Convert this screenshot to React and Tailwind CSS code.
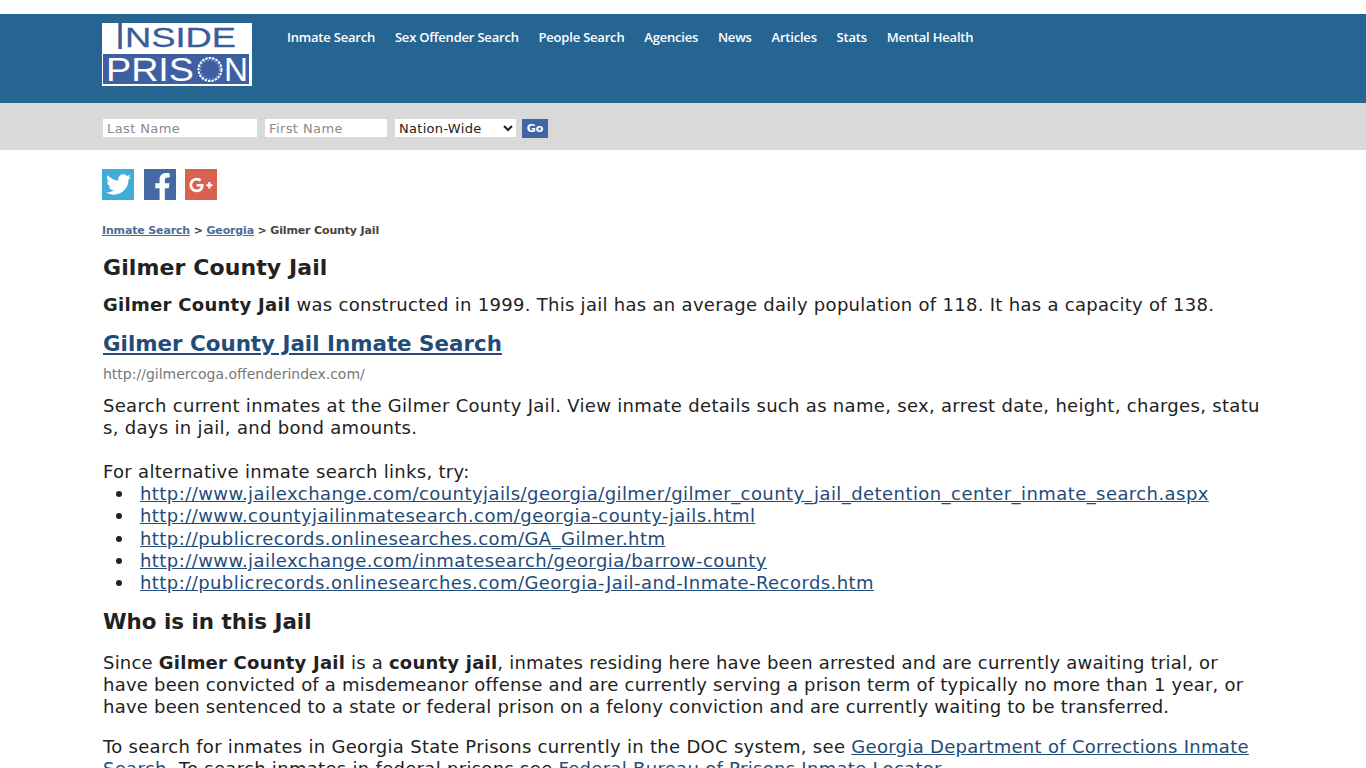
import { FaTwitter, FaFacebookF, FaGooglePlusG } from 'react-icons/fa';

const navLinks = ['Inmate Search', 'Sex Offender Search', 'People Search', 'Agencies', 'News', 'Articles', 'Stats', 'Mental Health'];

const altLinks = [
  'http://www.jailexchange.com/countyjails/georgia/gilmer/gilmer_county_jail_detention_center_inmate_search.aspx',
  'http://www.countyjailinmatesearch.com/georgia-county-jails.html',
  'http://publicrecords.onlinesearches.com/GA_Gilmer.htm',
  'http://www.jailexchange.com/inmatesearch/georgia/barrow-county',
  'http://publicrecords.onlinesearches.com/Georgia-Jail-and-Inmate-Records.htm',
];

function Logo() {
  return (
    <svg width="150" height="63" viewBox="0 0 150 63" className="shrink-0 font-['Liberation_Sans',sans-serif]">
      <rect width="150" height="63" fill="#fff" />
      <rect x="1" y="31" width="146" height="30" fill="#3f5fa3" />
      <text x="13" y="26" fontSize="36" fill="#3a5c9c">I</text>
      <text x="23" y="24" fontSize="28" fill="#3a5c9c" stroke="#3a5c9c" strokeWidth="0.3" textLength="111" lengthAdjust="spacingAndGlyphs">NSIDE</text>
      <text x="4" y="58" fontSize="33" fill="#fff" textLength="88" lengthAdjust="spacingAndGlyphs">PRIS</text>
      <circle cx="108" cy="46.5" r="11.5" fill="none" stroke="#fff" strokeWidth="2" strokeDasharray="2.5 1" />
      <circle cx="108" cy="46.5" r="9.5" fill="none" stroke="#c9d3e8" strokeWidth="1" strokeDasharray="1.5 2" />
      <text x="122" y="58" fontSize="33" fill="#fff" textLength="24" lengthAdjust="spacingAndGlyphs">N</text>
    </svg>
  );
}

export default function App() {
  return (
    <div className="font-['DejaVu_Sans',sans-serif] text-[#222] bg-white h-[768px] overflow-hidden">
      <div className="mt-[14px] h-[89px] bg-[#266591] pt-[9px] pl-[102px] flex">
        <Logo />
        <nav className="flex gap-[19.8px] ml-[35px] pt-[5px] font-['Open_Sans',sans-serif] font-semibold">
          {navLinks.map((link) => (
            <a key={link} className="text-white text-[13px] leading-[18px] tracking-[-0.2px] whitespace-nowrap">{link}</a>
          ))}
        </nav>
      </div>

      <div className="h-[47px] bg-[#d9d9d9] pl-[103px] pt-[16px] flex items-start gap-2 text-[13px]">
        <input placeholder="Last Name" className="w-[154px] h-[18px] bg-white px-1 pt-[2px] tracking-[0.4px] placeholder:text-[#8a8a8a] outline-none" />
        <input placeholder="First Name" className="w-[122px] h-[18px] bg-white px-1 pt-[2px] tracking-[0.4px] placeholder:text-[#8a8a8a] outline-none" />
        <select className="w-[121px] h-[18px] bg-white text-[#222] tracking-[0.3px]">
          <option>Nation-Wide</option>
        </select>
        <button className="w-[26px] h-[19px] bg-[#3f65a5] text-white text-[11px] font-bold ml-[-2px] pt-[1px]">Go</button>
      </div>

      <div className="pl-[102px]">
        <div className="flex pt-[19px]">
          <a className="w-8 h-[31px] bg-[#41acd8] text-white flex items-center justify-center"><FaTwitter size={25} /></a>
          <a className="w-8 h-[31px] ml-[10px] bg-[#456aa3] text-white flex items-end justify-center pl-[5px] overflow-hidden"><FaFacebookF size={27} /></a>
          <a className="w-8 h-[31px] ml-[9px] bg-[#d8614f] text-white flex items-center justify-center"><FaGooglePlusG size={24} /></a>
        </div>
      </div>

      <div className="pl-[103px] w-[1264px]">
        <div className="mt-[24px] ml-[-1px] text-[11px] leading-[14px] font-bold text-[#444] tracking-[-0.15px]">
          <a className="underline text-[#4b6d96]">Inmate Search</a> &gt; <a className="underline text-[#4b6d96]">Georgia</a> &gt; Gilmer County Jail
        </div>

        <h1 className="mt-[16px] text-[22px] leading-[28px] font-bold tracking-[0.1px]">Gilmer County Jail</h1>

        <p className="mt-[12px] text-[18px] leading-[22px] tracking-[0.29px]">
          <b>Gilmer County Jail</b> was constructed in 1999. This jail has an average daily population of 118. It has a capacity of 138.
        </p>

        <h2 className="mt-[12px] text-[21.4px] leading-[32px] font-bold">
          <a className="underline text-[#234b78]">Gilmer County Jail Inmate Search</a>
        </h2>

        <div className="mt-[5px] text-[14px] leading-[18px] text-[#777]">http://gilmercoga.offenderindex.com/</div>

        <div className="mt-[12px] text-[18px] leading-[22.2px] tracking-[0.31px] break-all">
          Search current inmates at the Gilmer County Jail. View inmate details such as name, sex, arrest date, height, charges, status, days in jail, and bond amounts.
        </div>
        <div className="mt-[22px] text-[18px] leading-[22.2px] tracking-[0.31px]">For alternative inmate search links, try:</div>
        <ul className="mt-[-0.5px] text-[18px] leading-[22.25px] tracking-[0.43px]">
          {altLinks.map((href) => (
            <li key={href} className="flex items-center">
              <span className="w-[6px] h-[6px] rounded-full bg-[#222] ml-[13px] mr-[18px] shrink-0" />
              <a className="underline text-[#234b78]">{href}</a>
            </li>
          ))}
        </ul>

        <h2 className="mt-[14px] text-[21.4px] leading-[28px] font-bold">Who is in this Jail</h2>

        <p className="mt-[16px] text-[18px] leading-[22px] tracking-[0.22px]">
          Since <b>Gilmer County Jail</b> is a <b>county jail</b>, inmates residing here have been arrested and are currently awaiting trial, or have been convicted of a misdemeanor offense and are currently serving a prison term of typically no more than 1 year, or have been sentenced to a state or federal prison on a felony conviction and are currently waiting to be transferred.
        </p>

        <p className="mt-[18px] text-[18px] leading-[22px] tracking-[0.3px]">
          To search for inmates in Georgia State Prisons currently in the DOC system, see <a className="underline text-[#234b78]">Georgia Department of Corrections Inmate Search</a>. To search inmates in federal prisons see <a className="underline text-[#234b78]">Federal Bureau of Prisons Inmate Locator</a>.
        </p>
      </div>
    </div>
  );
}
